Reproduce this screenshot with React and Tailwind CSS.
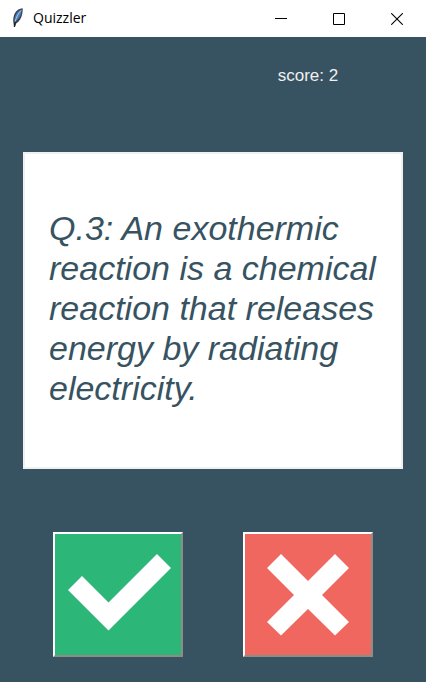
import React from "react";

function FeatherIcon() {
  return (
    <svg width="16" height="20" viewBox="0 0 16 20" aria-hidden="true">
      <path d="M13.6 0.3 C9.500 0.6 6 3.500 5 7.500 C4.200 10 4 12.500 4.400 14.800 L5 19 L6 18.800 L7.200 15.600 C10.500 13.500 12.800 9.500 13.400 5 C13.700 3 13.900 1.500 13.600 0.3 Z" fill="#3c4450" />
      <path d="M12.700 1.600 C9.800 2.600 7.200 5.200 6.200 8.600 C5.600 10.600 5.500 12.200 5.800 13.800 C8.600 12.400 11.400 9 12.300 4.800 Z" fill="#4b7fc0" />
      <path d="M12 2.400 C9.400 5.400 7.400 9 6 14" fill="none" stroke="#a9c9ea" strokeWidth="1" />
      <path d="M6.200 13.500 L5.400 19" fill="none" stroke="#1e1e1e" strokeWidth="1.200" />
    </svg>
  );
}

function TitleBar() {
  const control = "flex h-full w-[58px] items-center justify-center";
  return (
    <header className="flex h-[37px] shrink-0 items-center bg-white text-black">
      <div className="flex flex-1 items-center gap-2 pb-0.5 pl-[9px]">
        <FeatherIcon />
        <h1 className="font-['Open_Sans','Noto_Sans',sans-serif] text-[14px] leading-5">Quizzler</h1>
      </div>
      <button type="button" aria-label="Minimize" className={control}>
        <svg width="12" height="12" viewBox="0 0 12 12" shapeRendering="crispEdges">
          <path d="M0 5h12v1H0z" />
        </svg>
      </button>
      <button type="button" aria-label="Maximize" className={control}>
        <svg width="12" height="12" viewBox="0 0 12 12" fill="none" stroke="#000">
          <path d="M0.5 0.5h11v11h-11z" />
        </svg>
      </button>
      <button type="button" aria-label="Close" className={control}>
        <svg width="12" height="12" viewBox="0 0 12 12" fill="none" stroke="#000" strokeWidth="1.1">
          <path d="M0.2 0.2 11.8 11.8M11.8 0.2 0.2 11.8" />
        </svg>
      </button>
    </header>
  );
}

function AnswerButton({ label, color, points }) {
  return (
    <button
      type="button"
      aria-label={label}
      className={`h-[125px] w-[130px] border-2 border-t-white border-r-[#8d8d88] border-b-[#8d8d88] border-l-white ${color}`}
    >
      <svg className="block" width="126" height="121" viewBox="0 0 126 121" fill="#fff">
        <polygon points={points} />
      </svg>
    </button>
  );
}

export default function App() {
  return (
    <div className="flex min-h-screen flex-col bg-[#375362] font-['Liberation_Sans',Arial,sans-serif]">
      <TitleBar />
      <main className="flex flex-1 flex-col px-[23px] pt-[29px] pb-6">
        <div className="grid grid-cols-2 justify-items-center">
          <p className="col-start-2 text-[17px] leading-5 text-[#f0f0f0]">score: 2</p>
        </div>
        <section className="mt-[66px] flex min-h-[317px] items-center border-2 border-[#f0f0f0] bg-white pr-4 pb-[5px] pl-6">
          <p className="text-[34px] leading-10 text-[#375362] italic">
            Q.3: An exothermic reaction is a chemical reaction that releases energy by radiating electricity.
          </p>
        </section>
        <div className="mt-[63px] grid grid-cols-2 justify-items-center">
          <AnswerButton
            label="True"
            color="bg-[#2cb678]"
            points="13,56 27,42 53.5,68.5 102,20 116,34 53.5,96.5"
          />
          <AnswerButton
            label="False"
            color="bg-[#ef675f]"
            points="22,34 36,20 63,47 90,20 104,34 77,61 104,88 90,101.5 63,75 36,101.5 22,88 49,61"
          />
        </div>
      </main>
    </div>
  );
}
